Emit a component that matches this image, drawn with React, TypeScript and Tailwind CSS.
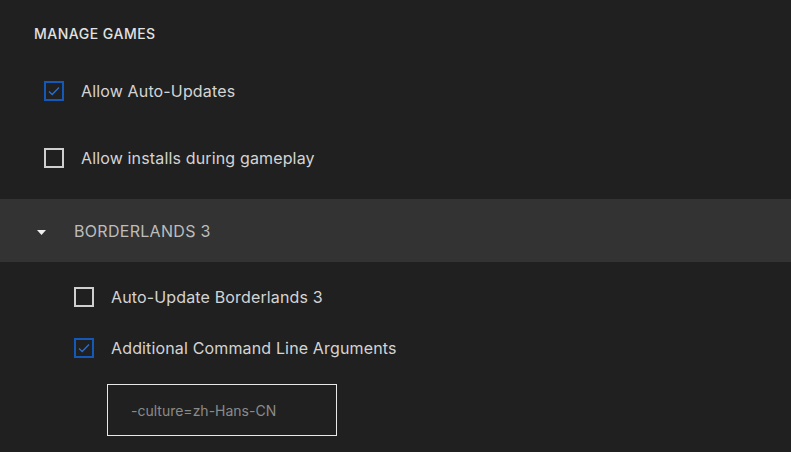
function Checkbox({ checked }: { checked: boolean }) {
  return checked ? (
    <div className="flex h-5 w-5 shrink-0 items-center justify-center border-2 border-[#1559b8]">
      <svg width="12" height="10" viewBox="0 0 12 10" fill="none">
        <path d="M1 5.5 L4.2 8.5 L11 1.5" stroke="#2a6fd0" strokeWidth="1.3" />
      </svg>
    </div>
  ) : (
    <div className="h-5 w-5 shrink-0 border-2 border-[#cfcfcf]" />
  );
}

function Option({ checked, label }: { checked: boolean; label: string }) {
  return (
    <div className="flex items-center gap-[17px]">
      <Checkbox checked={checked} />
      <span className="text-[16px] tracking-[0.15px] text-[#d4d4d4]">{label}</span>
    </div>
  );
}

export default function App() {
  return (
    <div
      className="h-[452px] w-[791px] overflow-hidden bg-[#202020]"
      style={{ fontFamily: "Inter, 'Noto Sans', sans-serif" }}
    >
      <div className="flex h-[66px] items-center pl-[34px]">
        <h2 className="text-[14px] font-medium uppercase tracking-[0.5px] text-[#e2e2e2]">
          Manage Games
        </h2>
      </div>

      <div className="flex h-[50px] items-center pl-[44px]">
        <Option checked label="Allow Auto-Updates" />
      </div>
      <div className="flex h-[83px] items-center pl-[44px]">
        <Option checked={false} label="Allow installs during gameplay" />
      </div>

      <div className="flex h-[63px] items-center gap-[28px] bg-[#333333] pl-[37px]">
        <svg width="9" height="6" viewBox="0 0 9 6" className="mt-[4px]">
          <path d="M0 0 L9 0 L4.5 5 Z" fill="#f0f0f0" />
        </svg>
        <span className="text-[16px] uppercase tracking-[0.3px] text-[#bdbdbd]">Borderlands 3</span>
      </div>

      <div className="flex h-[70px] items-center pl-[74px]">
        <Option checked={false} label="Auto-Update Borderlands 3" />
      </div>
      <div className="flex h-[32px] items-center pl-[74px]">
        <Option checked label="Additional Command Line Arguments" />
      </div>

      <div className="ml-[107px] mt-[20px] flex h-[52px] w-[230px] items-center border border-[#e8e8e8] pl-[23px]">
        <span className="text-[14px] text-[#8a8a8a]">-culture=zh-Hans-CN</span>
      </div>
    </div>
  );
}
